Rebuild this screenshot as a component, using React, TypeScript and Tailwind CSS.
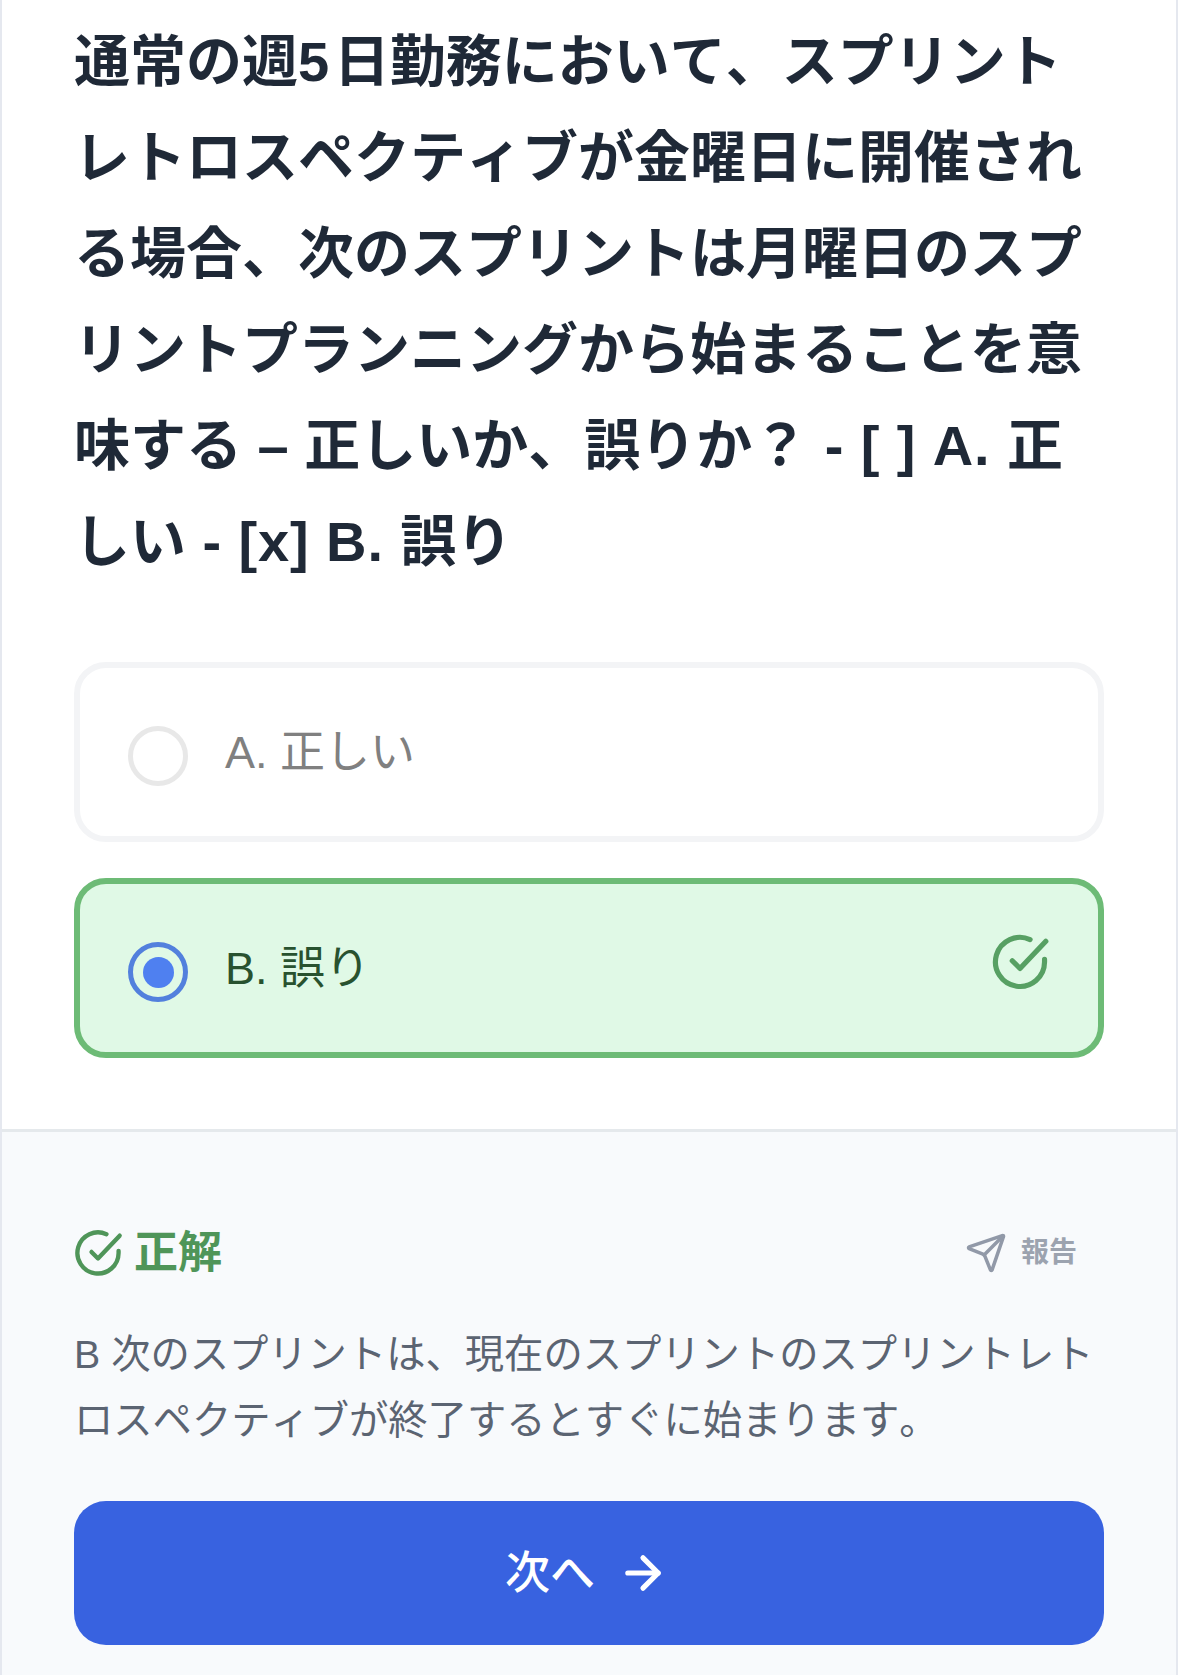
import { ArrowRight, Send } from "lucide-react";

const CheckIcon = ({ className }: { className: string }) => (
  <svg viewBox="0 0 24 24" fill="none" stroke="currentColor" strokeWidth="2" strokeLinecap="round" strokeLinejoin="round" className={className}>
    <path d="M21.5 11v1a9.5 9.5 0 1 1-5.6-8.7" />
    <path d="M22 4 12 14.5l-3-3" />
  </svg>
);

const App = () => {
  return (
    <div
      lang="ja"
      className="w-[1178px] h-[1675px] overflow-hidden bg-white border-x-2 border-[#e5e8ef] flex flex-col font-['Liberation_Sans','Noto_Sans_CJK_JP',sans-serif] [font-kerning:none] [text-spacing-trim:space-all]"
    >
      {/* question */}
      <div className="h-[1129px] shrink-0 px-[72px] pt-[14px]">
        <h1 className="w-[1030px] text-[56px] leading-[96px] font-bold text-[#1f2937]">
          通常の週<span className="tracking-[0.08em]">5</span>日勤務において、スプリントレトロスペクティブが金曜日に開催される場合、次のスプリントは月曜日のスプリントプランニングから始まることを意味する – 正しいか、誤りか？<span className="tracking-[0.016em]"> - [ ] A. </span>正しい<span className="tracking-[0.016em]"> - [x] B. </span>誤り
        </h1>

        {/* options */}
        <div className="mt-[72px] flex flex-col gap-[36px]">
          <div className="h-[180px] rounded-[32px] border-[6px] border-[#f3f4f6] bg-white flex items-center pl-[48px]">
            <div className="w-[60px] h-[60px] rounded-full border-[5px] border-[#e8e8e8] mt-[8px]" />
            <span className="ml-[37px] text-[45px] text-[#808080] mt-[2px]">A. 正しい</span>
          </div>
          <div className="h-[180px] rounded-[32px] border-[6px] border-[#6dbb76] bg-[#e0f9e6] flex items-center pl-[48px] pr-[47px]">
            <div className="w-[60px] h-[60px] rounded-full border-[5px] border-[#5280dd] flex items-center justify-center mt-[8px]">
              <div className="w-[31px] h-[31px] rounded-full bg-[#4f80f0]" />
            </div>
            <span className="ml-[37px] text-[45px] text-[#28522f] mt-[2px]">B. 誤り</span>
            <CheckIcon className="ml-auto w-[62px] h-[62px] text-[#57a063] -mt-[12px]" />
          </div>
        </div>
      </div>

      {/* result */}
      <div className="flex-1 border-t-[3px] border-[#e5e9ec] bg-[#f8fafc] px-[72px] pt-[93px]">
        <div className="flex items-center justify-between">
          <div className="flex items-center gap-[10px] -ml-[2px]">
            <CheckIcon className="w-[52px] h-[52px] text-[#4f9559]" />
            <span className="text-[44px] leading-[56px] font-bold text-[#4f9559]">正解</span>
          </div>
          <div className="flex items-center gap-[14px] pr-[27px]">
            <Send className="w-[42px] h-[42px] text-[#9199a8]" strokeWidth={2} />
            <span className="text-[28px] font-bold text-[#9ca3af]">報告</span>
          </div>
        </div>
        <p className="mt-[40px] text-[39.3px] leading-[66px] text-[#5b6472]">
          B 次のスプリントは、現在のスプリントのスプリントレトロスペクティブが終了するとすぐに始まります。
        </p>
        <button className="mt-[48px] w-[1030px] h-[144px] rounded-[32px] bg-[#3862e0] text-white flex items-center justify-center gap-[22px] pr-[4px]">
          <span className="text-[45px] font-medium mt-[2px]">次へ</span>
          <ArrowRight className="w-[52px] h-[52px]" strokeWidth={2.4} />
        </button>
      </div>
    </div>
  );
};

export default App;
